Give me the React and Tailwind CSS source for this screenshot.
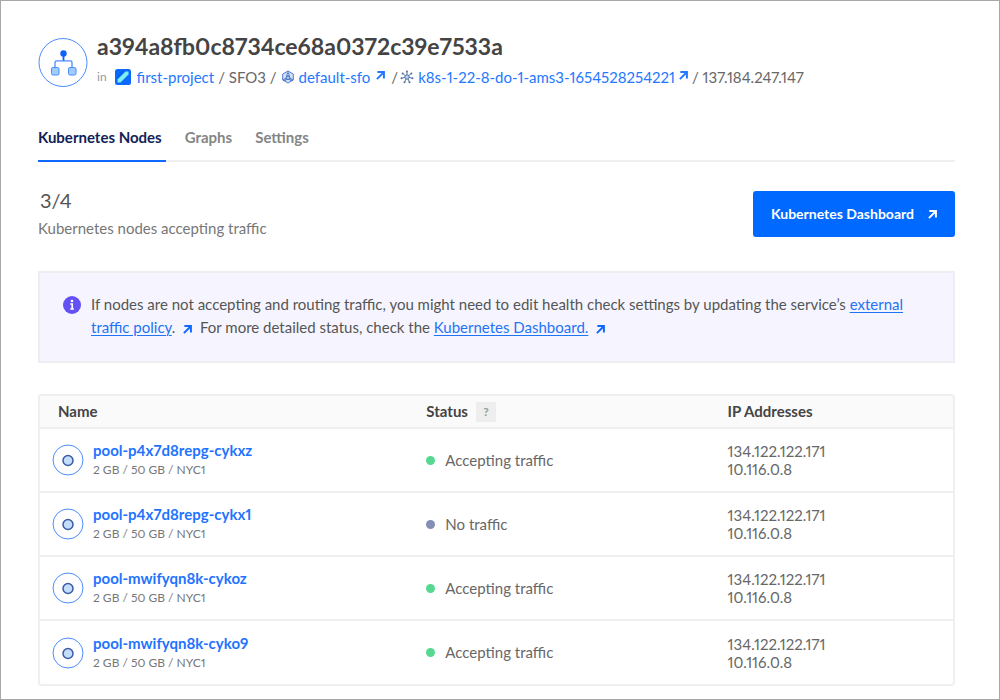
import React from "react";

const tabs = ["Kubernetes Nodes", "Graphs", "Settings"];

const nodes = [
  { name: "pool-p4x7d8repg-cykxz", accepting: true },
  { name: "pool-p4x7d8repg-cykx1", accepting: false },
  { name: "pool-mwifyqn8k-cykoz", accepting: true },
  { name: "pool-mwifyqn8k-cyko9", accepting: true },
];

function ArrowIcon({ className = "" }) {
  return (
    <svg
      viewBox="0 0 10 10"
      className={`inline-block h-[9px] w-[9px] shrink-0 ${className}`}
      fill="none"
      stroke="currentColor"
      strokeWidth="2.2"
      aria-hidden="true"
    >
      <path d="M1.5 1.2h7.3v7M8.6 1.4L1 9" />
    </svg>
  );
}

function LoadBalancerIcon() {
  return (
    <svg viewBox="0 0 50 50" className="h-[50px] w-[50px] shrink-0" fill="none" aria-hidden="true">
      <circle cx="25" cy="25.5" r="24" stroke="#4a8cff" />
      <circle cx="25.5" cy="16.5" r="3.2" fill="#0f62fe" />
      <path d="M25.5 18v6" stroke="#0f62fe" strokeWidth="1.8" />
      <path d="M17 30v-4.5c0-1 .7-1.7 1.7-1.7h13.600c1 0 1.700.7 1.700 1.700V30" stroke="#4a8cff" strokeWidth="1.3" />
      <rect x="13.5" y="30.5" width="7.500" height="7.500" rx="1.500" fill="#9fcdfb" stroke="#4a8cff" />
      <rect x="30.5" y="30.5" width="7.500" height="7.500" rx="1.500" fill="#9fcdfb" stroke="#4a8cff" />
    </svg>
  );
}

function ProjectIcon() {
  return (
    <svg viewBox="0 0 16 16" className="h-4 w-4 shrink-0" aria-hidden="true">
      <rect width="16" height="16" rx="2.5" fill="#0b69ff" />
      <path d="M2.5 10.5L10.5 2.5h3v3l-8 8h-3z" fill="#7df0ee" />
      <path d="M2 8.5L8.5 2" stroke="#0051d6" strokeWidth="1" />
    </svg>
  );
}

function VpcIcon() {
  return (
    <svg
      viewBox="0 0 14 14"
      className="h-3.5 w-3.5 shrink-0"
      fill="#cfe0fb"
      stroke="#4a72c0"
      strokeWidth="0.9"
      aria-hidden="true"
    >
      <path d="M7 1l5.3 3v6L7 13l-5.3-3V4z" />
      <path d="M7 3.5L4 10M7 3.5L10 10M1.7 10L4 9.5h6l2.3.5M7 1v2.5" fill="none" />
      <circle cx="7" cy="4.5" r="1.2" />
      <circle cx="7" cy="8" r="1.5" />
      <circle cx="4" cy="9.7" r="1" />
      <circle cx="10" cy="9.7" r="1" />
    </svg>
  );
}

function ClusterIcon() {
  return (
    <svg
      viewBox="0 0 14 14"
      className="h-3.5 w-3.5 shrink-0"
      fill="none"
      stroke="#55729f"
      aria-hidden="true"
    >
      <circle cx="7" cy="7" r="2.2" fill="#b9d4fa" />
      <path d="M7 4.8V1.5M8.7 5.6l2.6-2.1M9.2 7.5l3.2.7M8 9l1.4 3M6 9l-1.4 3M4.8 7.5l-3.2.7M5.3 5.6L2.7 3.5" />
      <g fill="#55729f" stroke="none">
        <circle cx="7" cy="1.5" r="1" />
        <circle cx="11.4" cy="3.5" r="1" />
        <circle cx="12.5" cy="8.2" r="1" />
        <circle cx="9.5" cy="12.2" r="1" />
        <circle cx="4.5" cy="12.2" r="1" />
        <circle cx="1.5" cy="8.2" r="1" />
        <circle cx="2.6" cy="3.5" r="1" />
      </g>
    </svg>
  );
}

function InfoIcon() {
  return (
    <svg viewBox="0 0 18 18" className="mt-[3px] h-[18px] w-[18px] shrink-0" aria-hidden="true">
      <circle cx="9" cy="9" r="9" fill="#6351f5" />
      <circle cx="9" cy="5" r="1.3" fill="#fff" />
      <path d="M7.3 8H9.2V13M7.3 13h3.6" stroke="#fff" strokeWidth="1.7" fill="none" />
    </svg>
  );
}

function NodeIcon() {
  return (
    <svg viewBox="0 0 32 32" className="h-8 w-8 shrink-0" aria-hidden="true">
      <circle cx="16" cy="16" r="15" fill="#fff" stroke="#4a8cff" />
      <circle cx="16" cy="16.5" r="5" fill="#c3ddfb" stroke="#3b5ba5" strokeWidth="1.5" />
    </svg>
  );
}

export default function App() {
  return (
    <main className="min-h-screen border border-[#a8a8a8] bg-white pt-9 pr-11 pb-3 pl-[37px] font-['Lato',sans-serif] text-[15px] text-[#676767] proportional-nums">
      <header className="flex items-start gap-[9px]">
        <LoadBalancerIcon />
        <div className="min-w-0">
          <h1 className="text-[23px] leading-[18px] font-bold text-[#444]">
            a394a8fb0c8734ce68a0372c39e7533a
          </h1>
          <div className="mt-3 flex items-center leading-5 whitespace-nowrap">
            <span className="mr-2 text-xs text-[#999]">in</span>
            <ProjectIcon />
            <a href="#project" className="ml-1.5 text-[#2478ff]">first-project</a>
            <span className="mx-1">/ SFO3 /</span>
            <VpcIcon />
            <a href="#vpc" className="ml-1 flex items-center gap-1.5 text-[#2478ff]">
              default-sfo
              <ArrowIcon className="mb-1" />
            </a>
            <span className="mr-0.5 ml-1.5">/</span>
            <ClusterIcon />
            <a href="#cluster" className="ml-1 flex items-center gap-1 text-[#2478ff]">
              k8s-1-22-8-do-1-ams3-1654528254221
              <ArrowIcon className="mb-1" />
            </a>
            <span className="ml-1">/ 137.184.247.147</span>
          </div>
        </div>
      </header>

      <nav className="mt-9 flex gap-[19px] border-b-2 border-[#f0f0f0] font-bold">
        {tabs.map((tab, i) => (
          <a
            key={tab}
            href={`#tab-${i}`}
            className={
              i === 0
                ? "-mb-0.5 border-b-2 border-[#0f69ff] pt-1 pr-1 pb-[13px] leading-5 text-[#112258]"
                : "pt-1 pr-1 pb-[13px] leading-5 text-[#858585]"
            }
          >
            {tab}
          </a>
        ))}
      </nav>

      <section className="mt-[26px] flex items-center justify-between">
        <div>
          <div className="pl-0.5 text-xl leading-6 text-[#555]">3/4</div>
          <p className="mt-1 leading-6 text-[#777]">Kubernetes nodes accepting traffic</p>
        </div>
        <button
          type="button"
          className="flex h-[46px] items-center gap-3.5 rounded-[3px] bg-[#0069ff] px-[18px] text-sm font-bold text-white"
        >
          Kubernetes Dashboard
          <ArrowIcon />
        </button>
      </section>

      <section className="mt-[31px] flex gap-2.5 border-2 border-[#ededf2] bg-[#f6f5ff] pt-5 pr-9 pb-[22px] pl-[23px] text-[#555]">
        <InfoIcon />
        <p className="leading-[23px]">
          If nodes are not accepting and routing traffic, you might need to edit health check
          settings by updating the service’s{" "}
          <a href="#policy" className="text-[#1f73f5] underline decoration-1 underline-offset-2">
            external traffic policy
          </a>
          . <ArrowIcon className="mx-1 text-[#0f69ff]" /> For more detailed status, check the{" "}
          <a href="#dashboard" className="text-[#1f73f5] underline decoration-1 underline-offset-2">
            Kubernetes Dashboard.
          </a>{" "}
          <ArrowIcon className="mx-1 text-[#0f69ff]" />
        </p>
      </section>

      <div className="mt-[31px] overflow-hidden rounded border-2 border-[#efefef]">
        <table className="w-full table-fixed text-left">
          <thead className="bg-[#fafafa] text-[#444]">
            <tr className="h-8 border-b-2 border-[#efefef]">
              <th className="w-[41%] pl-[18px] font-bold">Name</th>
              <th className="w-[33%] pl-3 font-bold">
                <div className="flex items-center gap-2">
                  Status
                  <button
                    type="button"
                    aria-label="About node status"
                    className="h-5 w-5 bg-[#eee] text-xs leading-5 font-bold text-[#999]"
                  >
                    ?
                  </button>
                </div>
              </th>
              <th className="pl-3 font-bold">IP Addresses</th>
            </tr>
          </thead>
          <tbody>
            {nodes.map((node) => (
              <tr key={node.name} className="h-16 border-b-2 border-[#efefef] last:border-b-0">
                <td className="pl-3">
                  <div className="flex items-center gap-[9px]">
                    <NodeIcon />
                    <div>
                      <a href={`#${node.name}`} className="block leading-5 font-bold text-[#1f73ff]">
                        {node.name}
                      </a>
                      <div className="text-xs leading-5 text-[#777]">2 GB / 50 GB / NYC1</div>
                    </div>
                  </div>
                </td>
                <td className="pl-3">
                  <div className="flex items-center gap-2.5">
                    <span
                      className={
                        node.accepting
                          ? "h-[9px] w-[9px] rounded-full bg-[#57d892]"
                          : "h-[9px] w-[9px] rounded-full bg-[#838fb5]"
                      }
                    />
                    {node.accepting ? "Accepting traffic" : "No traffic"}
                  </div>
                </td>
                <td className="pl-3 leading-[18px]">
                  <div>134.122.122.171</div>
                  <div>10.116.0.8</div>
                </td>
              </tr>
            ))}
          </tbody>
        </table>
      </div>
    </main>
  );
}
